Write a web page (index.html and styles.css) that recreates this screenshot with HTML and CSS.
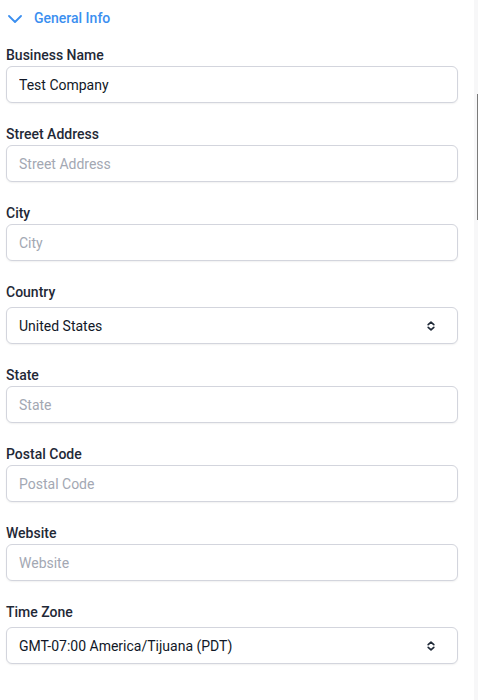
FILE: index.html
```html
<!DOCTYPE html>
<html>
<head>
<meta charset="utf-8">
<link rel="stylesheet" href="styles.css">
</head>
<body>
<div class="page">
  <main class="content">
    <div class="section-head">
      <svg class="chev" width="14" height="8" viewBox="0 0 14 8"><path d="M1 1l6 6 6-6" fill="none" stroke="#3b8ff0" stroke-width="1.8" stroke-linecap="round" stroke-linejoin="round"/></svg>
      <span class="section-title">General Info</span>
    </div>
    <div class="field">
      <label class="label">Business Name</label>
      <input class="input" type="text" value="Test Company">
    </div>
    <div class="field">
      <label class="label">Street Address</label>
      <input class="input" type="text" placeholder="Street Address">
    </div>
    <div class="field">
      <label class="label">City</label>
      <input class="input" type="text" placeholder="City">
    </div>
    <div class="field field-select">
      <label class="label">Country</label>
      <div class="select"><span>United States</span>
        <svg class="sort" width="8" height="10" viewBox="0 0 8 10"><path d="M1.2 3.6L4 1.2l2.8 2.4M1.2 6.4L4 8.8l2.8-2.4" fill="none" stroke="#1f2937" stroke-width="1.7" stroke-linecap="round" stroke-linejoin="round"/></svg>
      </div>
    </div>
    <div class="field">
      <label class="label">State</label>
      <input class="input" type="text" placeholder="State">
    </div>
    <div class="field">
      <label class="label">Postal Code</label>
      <input class="input" type="text" placeholder="Postal Code">
    </div>
    <div class="field">
      <label class="label">Website</label>
      <input class="input" type="text" placeholder="Website">
    </div>
    <div class="field field-select">
      <label class="label">Time Zone</label>
      <div class="select"><span>GMT-07:00 America/Tijuana (PDT)</span>
        <svg class="sort" width="8" height="10" viewBox="0 0 8 10"><path d="M1.2 3.6L4 1.2l2.8 2.4M1.2 6.4L4 8.8l2.8-2.4" fill="none" stroke="#1f2937" stroke-width="1.7" stroke-linecap="round" stroke-linejoin="round"/></svg>
      </div>
    </div>
  </main>
  <div class="rail"><div class="thumb"></div></div>
</div>
</body>
</html>
```
FILE: styles.css
```css
* { box-sizing: border-box; }
html, body { margin: 0; padding: 0; background: #fff; }
body { font-family: Roboto, "Noto Sans", Arial, sans-serif; }
.page { display: flex; width: 478px; height: 700px; overflow: hidden; }
.content { flex: 1; padding: 8px 16px 0 6px; }
.rail { width: 4px; background: #f7f7f8; padding-top: 94px; display: flex; justify-content: flex-end; }
.thumb { width: 1.5px; height: 126px; background: #7a7a7a; }
.section-head { display: flex; align-items: center; height: 20px; padding-left: 2px; margin-bottom: 17px; }
.chev { margin-right: 12px; margin-top: 2px; }
.section-title { color: #3b8ff0; font-size: 14px; font-weight: 500; }
.field { display: flex; flex-direction: column; margin-bottom: 21px; }
.label { font-size: 14px; font-weight: 500; color: #1f2937; line-height: 20px; margin-bottom: 1px; }
.field-select .label { margin-bottom: 5px; }
.input, .select {
  height: 37px; width: 100%; border: 1px solid #d3d5dd; border-radius: 6px;
  box-shadow: 0 1px 2px rgba(0,0,0,0.06); background: #fff;
  font-family: Roboto, "Noto Sans", Arial, sans-serif; font-size: 14px; color: #111827;
  padding: 0 12px; outline: none;
}
.input::placeholder { color: #a3a8b3; }
.select { display: flex; align-items: center; justify-content: space-between; padding: 0 22px 0 12px; }
.sort { flex: none; }
```
